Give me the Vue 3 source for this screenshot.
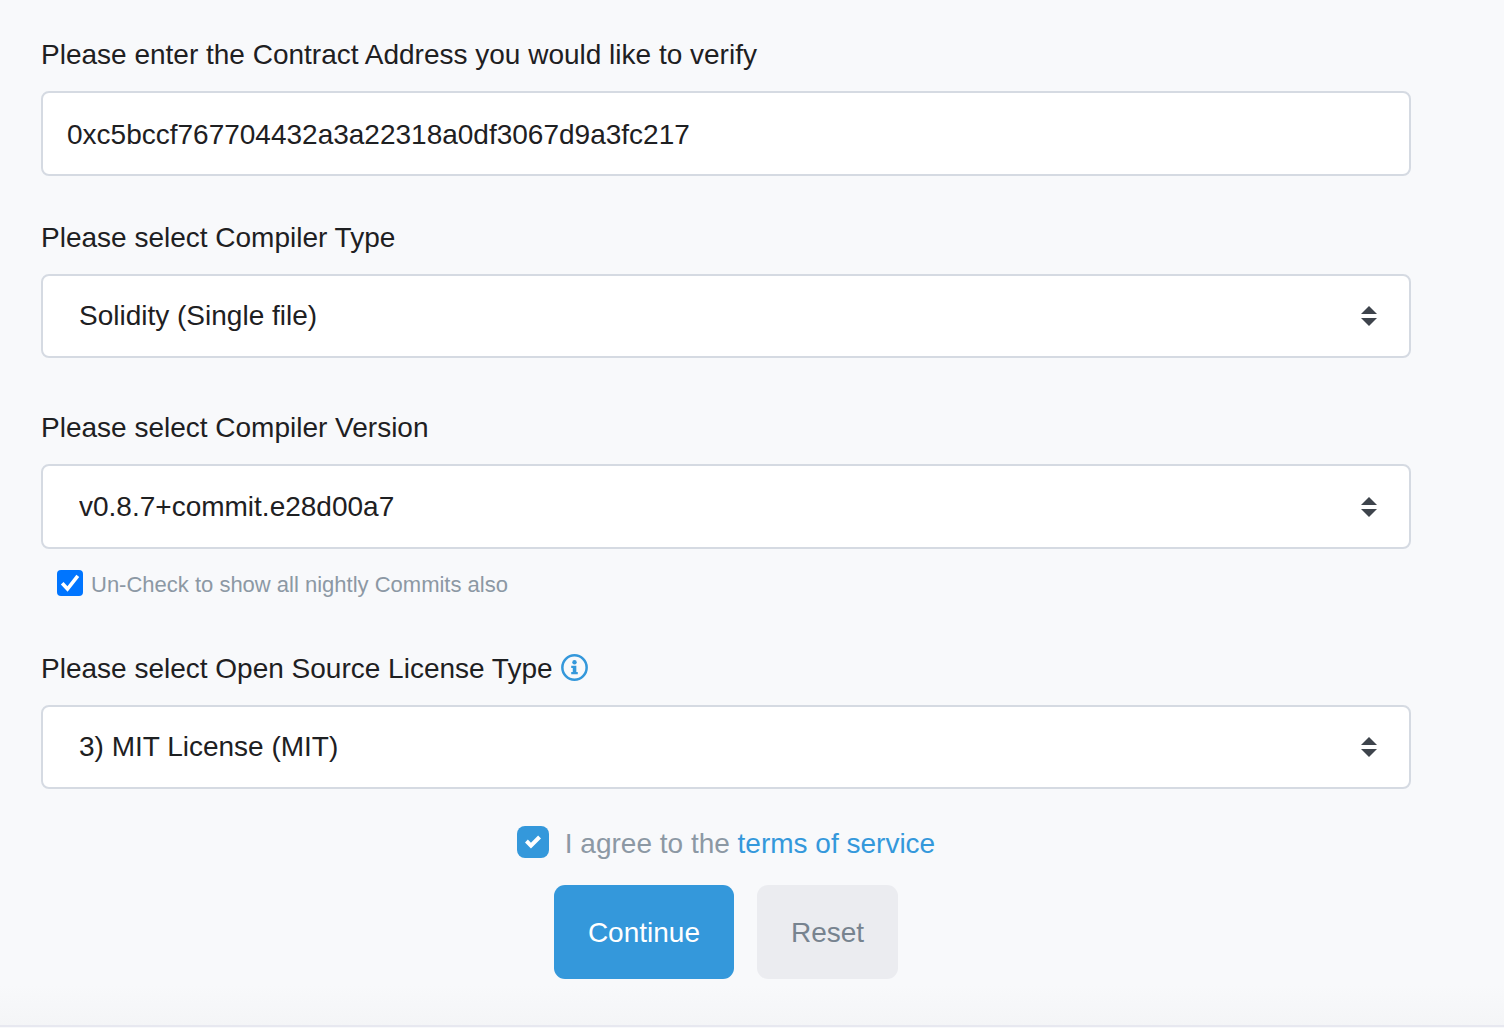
<script setup>
import { ref } from 'vue'

const address = ref('0xc5bccf767704432a3a22318a0df3067d9a3fc217')
const compilerType = ref('Solidity (Single file)')
const compilerVersion = ref('v0.8.7+commit.e28d00a7')
const license = ref('3) MIT License (MIT)')
const hideNightly = ref(true)
const agreed = ref(true)
</script>

<template>
  <main class="page">
    <form class="form" @submit.prevent>
      <div class="field">
        <label class="label" for="address">Please enter the Contract Address you would like to verify</label>
        <input id="address" v-model="address" class="control text" type="text" spellcheck="false" />
      </div>

      <div class="field roomy">
        <label class="label" for="type">Please select Compiler Type</label>
        <div class="picker">
          <select id="type" v-model="compilerType" class="control">
            <option>Solidity (Single file)</option>
          </select>
          <svg class="arrows" viewBox="0 0 16 20" aria-hidden="true"><path d="M8 0l8 8H0zM0 12h16l-8 8z" /></svg>
        </div>
      </div>

      <div class="field">
        <label class="label" for="version">Please select Compiler Version</label>
        <div class="picker">
          <select id="version" v-model="compilerVersion" class="control tall">
            <option>v0.8.7+commit.e28d00a7</option>
          </select>
          <svg class="arrows" viewBox="0 0 16 20" aria-hidden="true"><path d="M8 0l8 8H0zM0 12h16l-8 8z" /></svg>
        </div>
        <div class="nightly">
          <input id="nightly" v-model="hideNightly" class="tick" type="checkbox" />
          <label for="nightly">Un-Check to show all nightly Commits also</label>
        </div>
      </div>

      <div class="field">
        <div class="label-row">
          <label class="label" for="license">Please select Open Source License Type</label>
          <a class="info" href="#licenses" aria-label="License information">
            <svg viewBox="0 0 28 28">
              <circle cx="14" cy="14" r="12.6" fill="none" stroke="currentColor" stroke-width="2.6" />
              <circle cx="14" cy="8.6" r="2.3" fill="currentColor" />
              <path d="M10.6 12.2h5.3v6.4h1.5v2.5h-6.8v-2.5h1.6v-4h-1.6z" fill="currentColor" />
            </svg>
          </a>
        </div>
        <div class="picker">
          <select id="license" v-model="license" class="control">
            <option>3) MIT License (MIT)</option>
          </select>
          <svg class="arrows" viewBox="0 0 16 20" aria-hidden="true"><path d="M8 0l8 8H0zM0 12h16l-8 8z" /></svg>
        </div>
      </div>

      <div class="agree">
        <input id="agree" v-model="agreed" class="tick large" type="checkbox" />
        <label for="agree">I agree to the <a href="#terms">terms of service</a></label>
      </div>

      <div class="actions">
        <button class="primary" type="submit">Continue</button>
        <button class="secondary" type="reset">Reset</button>
      </div>
    </form>
  </main>
</template>

<style>
body {
  margin: 0;
  background: #f8f9fb;
}
</style>

<style scoped>
.page {
  box-sizing: border-box;
  padding: 34px 93px 46px 41px;
  border-bottom: 2px solid #e7e8f0;
  background: linear-gradient(to top, #f4f5f7, #f8f9fb 40px);
  color: #1e2022;
  font-family: "Liberation Sans", Arial, sans-serif;
  font-size: 28px;
  line-height: 42px;
}

.field {
  margin-bottom: 41px;
}

.field.roomy {
  margin-bottom: 49px;
}

.label {
  display: block;
  margin-bottom: 15px;
}

.label-row {
  display: flex;
  gap: 8px;
}

.info {
  height: 28px;
  margin-top: 6px;
  color: #3498db;
}

.info svg {
  display: block;
  width: 27px;
  height: 27px;
}

.control {
  display: block;
  box-sizing: border-box;
  width: 100%;
  height: 84px;
  margin: 0;
  padding: 0 72px 0 36px;
  appearance: none;
  border: 2px solid #d5dae2;
  border-radius: 8px;
  background: #fff;
  color: inherit;
  font: inherit;
}

.control.text {
  height: 85px;
  padding: 2px 24px 0;
}

.control.tall {
  height: 85px;
  padding-top: 1px;
}

.picker {
  position: relative;
}

.arrows {
  position: absolute;
  top: 32px;
  right: 34px;
  width: 16px;
  height: 20px;
  fill: #3e444c;
  pointer-events: none;
}

.tall + .arrows {
  top: 33px;
}

.tick {
  flex: none;
  width: 26px;
  height: 26px;
  margin: 0;
  appearance: none;
  border: 1px solid #8c98a4;
  border-radius: 4px;
  background: #fff;
}

.tick:checked {
  border: 0;
  background: #0075ff url("data:image/svg+xml,%3Csvg xmlns='http://www.w3.org/2000/svg' viewBox='0 0 26 26'%3E%3Cpath d='M5.2 13.2l5.3 5.8L20.8 5.8' fill='none' stroke='white' stroke-width='3.6'/%3E%3C/svg%3E") center / 26px no-repeat;
}

.tick.large {
  width: 32px;
  height: 32px;
  border-radius: 8px;
}

.tick.large:checked {
  background: #3498db url("data:image/svg+xml,%3Csvg xmlns='http://www.w3.org/2000/svg' viewBox='0 0 8 8'%3E%3Cpath d='M6.564.75l-3.59 3.612-1.538-1.55L0 4.26 2.974 7.25 8 2.193z' fill='white'/%3E%3C/svg%3E") center / 16px no-repeat;
}

.nightly {
  display: flex;
  align-items: center;
  gap: 8px;
  padding: 19px 16px 9px;
  color: #8c98a4;
  font-size: 22px;
  line-height: 26px;
}

.nightly label,
.agree label {
  padding-top: 4px;
}

.agree {
  display: flex;
  justify-content: center;
  align-items: center;
  gap: 16px;
  margin-top: -11px;
  color: #8c98a4;
}

.agree a {
  color: #3498db;
  text-decoration: none;
}

.actions {
  display: flex;
  justify-content: center;
  gap: 23px;
  margin-top: 20px;
}

.actions button {
  height: 94px;
  padding: 2px 34px 0;
  border: 0;
  border-radius: 11px;
  font: inherit;
}

.primary {
  background: #3498db;
  color: #fff;
}

.secondary {
  background: #ebecf0;
  color: #77838f;
}
</style>
